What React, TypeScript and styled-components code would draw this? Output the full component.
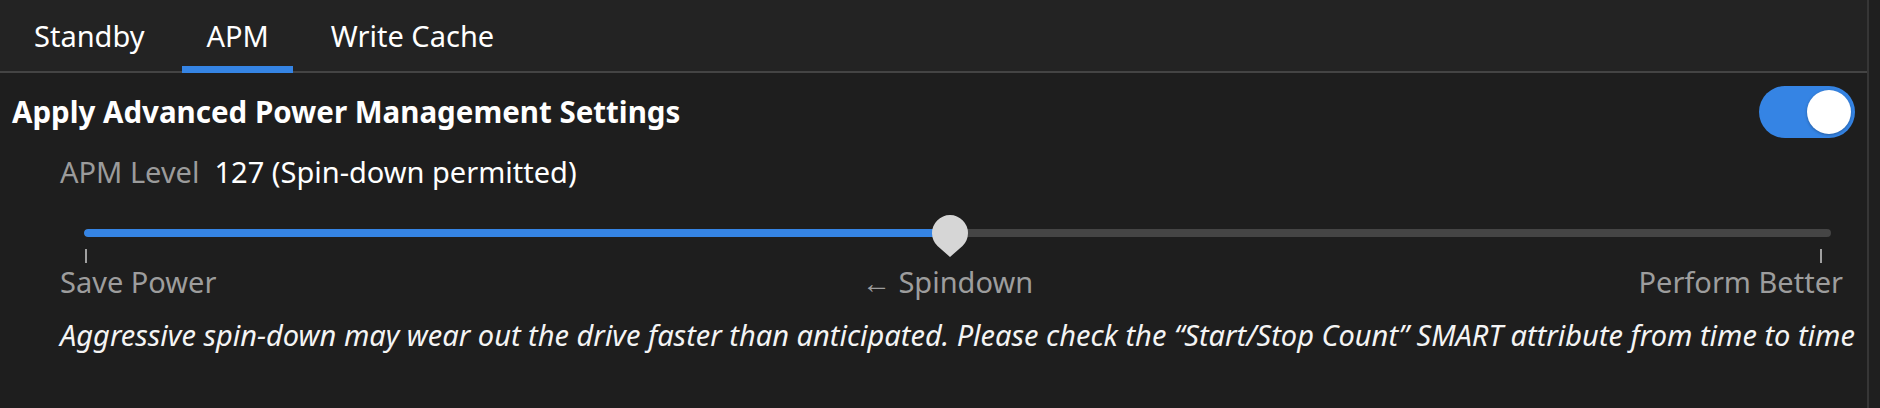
import React from 'react';
import styled, { createGlobalStyle } from 'styled-components';

const GlobalStyle = createGlobalStyle`
  html, body {
    margin: 0;
    padding: 0;
    background: #1e1e1e;
  }
  body {
    font-family: "Noto Sans", "Open Sans", sans-serif;
    color: #ffffff;
  }
`;

const Page = styled.div`
  display: flex;
  width: 1880px;
  height: 408px;
  overflow: hidden;
  background: #1e1e1e;
`;

const Main = styled.div`
  flex: 1;
  display: flex;
  flex-direction: column;
  min-width: 0;
`;

const SideStrip = styled.div`
  width: 11px;
  border-left: 2px solid #363636;
  background: #1f1f1f;
`;

const TabBar = styled.div`
  display: flex;
  align-items: stretch;
  gap: 14px;
  height: 71px;
  padding-left: 10px;
  background: #232323;
  border-bottom: 2px solid #444444;
`;

const Tab = styled.div<{ $active?: boolean }>`
  position: relative;
  display: flex;
  align-items: center;
  padding: 0 24px;
  font-size: 29px;
  line-height: 40px;
  color: #ffffff;

  &::after {
    content: '';
    display: ${(p) => (p.$active ? 'block' : 'none')};
    position: absolute;
    left: 0;
    right: 0;
    bottom: -2px;
    height: 7px;
    background: #3584e4;
  }
`;

const Panel = styled.div`
  display: flex;
  flex-direction: column;
  padding: 13px 12px 0 12px;
`;

const HeaderRow = styled.div`
  display: flex;
  align-items: center;
  justify-content: space-between;
  height: 52px;
`;

const Title = styled.div`
  font-size: 29.5px;
  font-weight: 700;
  line-height: 40px;
`;

const Switch = styled.div<{ $on?: boolean }>`
  display: flex;
  align-items: center;
  justify-content: ${(p) => (p.$on ? 'flex-end' : 'flex-start')};
  width: 96px;
  height: 52px;
  padding: 4px;
  box-sizing: border-box;
  border-radius: 26px;
  background: ${(p) => (p.$on ? '#3584e4' : '#545454')};
`;

const Knob = styled.div`
  width: 44px;
  height: 44px;
  border-radius: 50%;
  background: #ffffff;
  box-shadow: 0 1px 3px rgba(0, 0, 0, 0.3);
`;

const LevelRow = styled.div`
  display: flex;
  gap: 15px;
  margin: 14px 0 0 48px;
  font-size: 29px;
  line-height: 40px;
`;

const LevelLabel = styled.span`
  color: #9b9b9b;
`;

const LevelValue = styled.span`
  color: #ffffff;
`;

const SliderBox = styled.div`
  position: relative;
  height: 52px;
  margin: 19px 24px 0 72px;
`;

const Track = styled.div`
  position: absolute;
  left: 0;
  right: 0;
  top: 18px;
  height: 8px;
  border-radius: 4px;
  background: #454545;
  overflow: hidden;
`;

const Fill = styled.div`
  height: 100%;
  background: #3584e4;
  border-radius: 4px;
`;

const Ticks = styled.div`
  position: absolute;
  left: 0;
  right: 9px;
  top: 38px;
  display: flex;
  justify-content: space-between;
  padding-left: 1px;
`;

const Tick = styled.span`
  width: 2px;
  height: 14px;
  background: #a0a0a0;
`;

const Thumb = styled.svg`
  position: absolute;
  top: 4px;
  width: 36px;
  height: 44px;
  margin-left: -18px;
`;

const MarkLabels = styled.div`
  display: grid;
  grid-template-columns: 1fr auto 1fr;
  margin: -1px 12px 0 48px;
  font-size: 29px;
  line-height: 40px;
  color: #9d9d9d;
`;

const MarkLabel = styled.span<{ $align: 'start' | 'center' | 'end' }>`
  justify-self: ${(p) => p.$align};
  white-space: nowrap;
`;

const CenterMark = styled(MarkLabel)`
  margin-right: 8px;
`;

const Hint = styled.div`
  margin: 13px 0 0 48px;
  font-size: 29px;
  font-style: italic;
  line-height: 40px;
  color: #f4f4f4;
  white-space: nowrap;
`;

const TABS = ['Standby', 'APM', 'Write Cache'];

// value range of the drive's APM level slider
const MIN = 1;
const MAX = 254;
const LEVEL = 127;

const App = () => {
  const ratio = (LEVEL - MIN) / (MAX - MIN);
  // marks sit between 1px and (width - 9px) of the track
  const pos = `calc(1px + (100% - 10px) * ${ratio})`;

  return (
    <>
      <GlobalStyle />
      <Page>
        <Main>
          <TabBar>
            {TABS.map((t) => (
              <Tab key={t} $active={t === 'APM'}>
                {t}
              </Tab>
            ))}
          </TabBar>
          <Panel>
            <HeaderRow>
              <Title>Apply Advanced Power Management Settings</Title>
              <Switch $on>
                <Knob />
              </Switch>
            </HeaderRow>
            <LevelRow>
              <LevelLabel>APM Level</LevelLabel>
              <LevelValue>127 (Spin-down permitted)</LevelValue>
            </LevelRow>
            <SliderBox>
              <Track>
                <Fill style={{ width: pos }} />
              </Track>
              <Ticks>
                <Tick />
                <Tick />
              </Ticks>
              <Thumb style={{ left: pos }} viewBox="0 0 36 44">
                <path d="M18 42 L5.5 31 A18 18 0 1 1 30.5 31 Z" fill="#d6d6d6" />
              </Thumb>
            </SliderBox>
            <MarkLabels>
              <MarkLabel $align="start">Save Power</MarkLabel>
              <CenterMark $align="center">← Spindown</CenterMark>
              <MarkLabel $align="end">Perform Better</MarkLabel>
            </MarkLabels>
            <Hint>
              Aggressive spin-down may wear out the drive faster than anticipated. Please check the “Start/Stop Count” SMART attribute from time to time
            </Hint>
          </Panel>
        </Main>
        <SideStrip />
      </Page>
    </>
  );
};

export default App;
